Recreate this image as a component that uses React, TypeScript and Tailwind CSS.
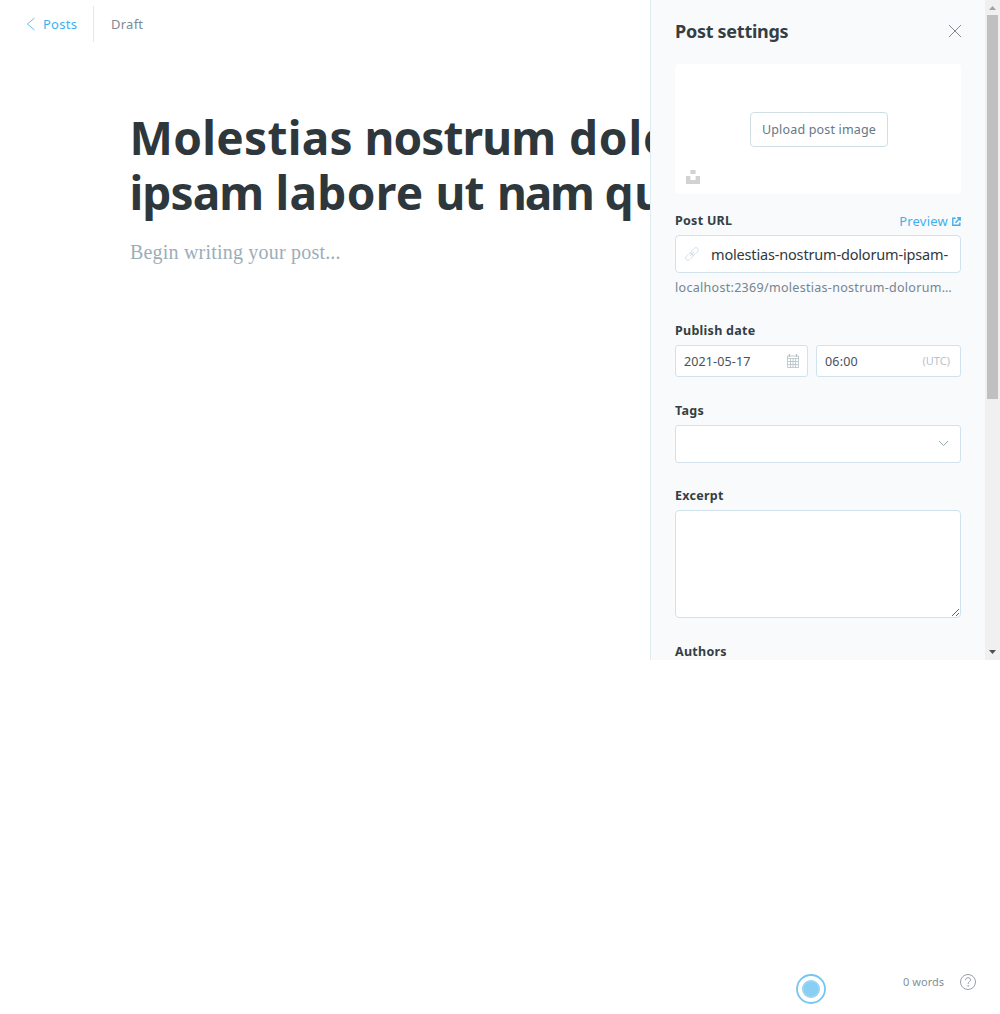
import type { ReactNode } from "react";

function Field({ label, action, className, children }: { label: string; action?: ReactNode; className: string; children?: ReactNode }) {
  return (
    <div className={className}>
      <div className="mb-[7px] flex h-[15px] items-center justify-between">
        <span className="text-[12.5px] leading-[15px] font-bold tracking-[0.27px] text-[#343f44]">{label}</span>
        {action}
      </div>
      {children}
    </div>
  );
}

function LinkIcon() {
  return (
    <svg width="14" height="14" viewBox="0 0 14 14" fill="none" stroke="#cfdbe2" strokeWidth="0.8">
      <g transform="rotate(-45 7 7)">
        <rect x="-1" y="4.6" width="8.6" height="4.8" rx="2.4" />
        <rect x="6.4" y="4.6" width="8.6" height="4.8" rx="2.4" />
        <path d="M4 7h6" />
      </g>
    </svg>
  );
}

function CalendarIcon() {
  return (
    <svg width="14" height="14" viewBox="0 0 14 14" fill="none" stroke="#b4bfc4" strokeWidth="0.8">
      <path d="M1.5 2h11v11.5h-11zM1.5 4.5h11" />
      <path d="M3.5 0v3M10.5 0v3" strokeWidth="1.2" />
      <path d="M4.5 5v8M7 5v8M9.5 5v8M2 7.5h10M2 10.5h10" strokeWidth="0.8" />
    </svg>
  );
}

export default function App() {
  return (
    <div className="flex h-[1014px] w-[1000px] flex-col justify-between overflow-hidden bg-white font-['Noto_Sans',sans-serif]">
      <div className="flex">
        <main className="h-[660px] w-[650px] overflow-hidden">
          <header className="flex h-12 items-center pl-[26px]">
            <svg width="10" height="14" viewBox="0 0 10 14" fill="none" stroke="#3eb0ef" strokeWidth="0.8"><path d="M8.5 1 1.5 7l7 6" /></svg>
            <span className="mt-0.5 ml-[7px] w-[34px] text-[13px] tracking-[0.25px] text-[#3eb0ef]">Posts</span>
            <span className="ml-4 h-9 w-px bg-[#dfe9f2]" />
            <span className="mt-0.5 ml-[17px] text-[13px] tracking-[0.25px] text-[#7c8b9a]">Draft</span>
          </header>
          <h1 className="mt-[62px] ml-[129.5px] w-[700px] text-[46px] leading-[55px] font-bold text-[#2e383c]">
            <span className="flex">
              <span className="w-[235px] tracking-[0.3px]">Molestias </span>
              <span className="w-[204.5px] tracking-[-0.9px]">nostrum </span>
              <span className="tracking-[0.8px]">dolorum </span>
            </span>
            <span className="flex">
              <span className="w-[146px] tracking-[-0.9px]">ipsam </span>
              <span className="w-[160px] tracking-[0.3px]">labore </span>
              <span className="w-[61.5px] tracking-[-0.8px]">ut </span>
              <span className="w-[107.5px] tracking-[-2.2px]">nam </span>
              <span className="tracking-[0.6px]">qui</span>
            </span>
          </h1>
          <p className="mt-[18px] ml-[130px] font-['Liberation_Serif',serif] text-xl tracking-[0.2px] text-[#9baeb8]">Begin writing your post...</p>
        </main>

        <aside className="flex h-[660px] w-[350px] overflow-hidden border-l border-[#dfecf4] bg-[#f9fafc]">
          <div className="w-[334px] shrink-0 px-6">
            <div className="flex h-16 items-center justify-between pr-px pb-0.5">
              <h2 className="text-[18px] font-bold tracking-[-0.27px] text-[#343f44]">Post settings</h2>
              <svg className="-mr-0.5" width="14" height="14" viewBox="0 0 14 14" stroke="#6b757b" strokeWidth="0.85"><path d="m1 1 12 12M13 1 1 13" /></svg>
            </div>
            <div className="flex h-[130px] w-[286px] flex-col items-center rounded bg-white pt-12">
              <button className="ml-0.5 h-[35px] w-[138px] rounded border border-[#d0dfe6] pt-px text-[12.5px] tracking-[0.17px] whitespace-nowrap text-[#647984]">Upload post image</button>
              <svg className="mt-[23px] ml-[11px] self-start" width="14" height="14" viewBox="0 0 14 14" fill="#d2d2d2"><path d="M4.4 0h5.2v4H4.4zM0 6h4.4v4h5.2V6H14v8H0z" /></svg>
            </div>

            <Field
              className="mt-[19px]"
              label="Post URL"
              action={
                <span className="mt-0.5 flex items-center gap-1 text-[13px] tracking-[0.22px] text-[#3eb0ef]">
                  Preview
                  <svg width="9" height="9" viewBox="0 0 9 9" fill="none" stroke="#3eb0ef" strokeWidth="1.4"><path d="M3.6 1.3H.8v7h7V5.4M3.4 5.7 8 1M5.2.8h3v3" /></svg>
                </span>
              }
            >
              <div className="flex h-[38px] w-[286px] items-center rounded border border-[#d2e2ec] bg-white pl-[9px]">
                <LinkIcon />
                <span className="mt-0.5 ml-3 text-[14.5px] tracking-[-0.17px] whitespace-nowrap text-[#30383d]">molestias-nostrum-dolorum-ipsam-</span>
              </div>
              <p className="mt-[5px] text-[12.5px] leading-[19px] tracking-[0.3px] whitespace-nowrap text-[#74858f]">localhost:2369/molestias-nostrum-dolorum…</p>
            </Field>

            <Field className="mt-[26px]" label="Publish date">
              <div className="flex h-8 w-[286px] gap-2 text-[12.5px] text-[#45525a]">
                <div className="flex w-[133px] items-center justify-between rounded-[3px] border border-[#d2e2ec] bg-white pr-[7px] pl-2">
                  <span className="mt-0.5 tracking-[0.12px]">2021-05-17</span>
                  <CalendarIcon />
                </div>
                <div className="flex w-[145px] items-center justify-between rounded-[3px] border border-[#d2e2ec] bg-white pr-2.5 pl-2">
                  <span className="mt-0.5 tracking-[0.2px]">06:00</span>
                  <span className="text-[11px] text-[#b6c3cb]">(UTC)</span>
                </div>
              </div>
            </Field>

            <Field className="mt-[26px]" label="Tags">
              <div className="flex h-[38px] w-[286px] items-center justify-end rounded-[3px] border border-[#d2e2ec] bg-white pr-[11px] pb-px">
                <svg width="11" height="7" viewBox="0 0 11 7" fill="none" stroke="#93a8b3"><path d="m1 1 4.5 4.5L10 1" /></svg>
              </div>
            </Field>

            <Field className="mt-[25px]" label="Excerpt">
              <textarea className="block h-[108px] w-[286px] resize rounded border border-[#d2e2ec] bg-white" />
            </Field>

            <Field className="mt-[26px]" label="Authors" />
          </div>

          <div className="flex w-[15px] shrink-0 flex-col items-center bg-[#f0f0f0]">
            <svg className="shrink-0" width="15" height="15" viewBox="0 0 15 15" fill="#a3a3a3"><path d="M4 10h7L7.5 6z" /></svg>
            <div className="h-[384px] w-[11px] shrink-0 bg-[#c0c0c0]" />
            <svg className="mt-auto shrink-0" width="15" height="15" viewBox="0 0 15 15" fill="#505050"><path d="M4 5h7L7.5 9z" /></svg>
          </div>
        </aside>
      </div>

      <footer className="flex h-[46px] items-start justify-end pr-[23px]">
        <svg className="mt-[6px]" width="30" height="30" viewBox="0 0 30 30">
          <circle cx="15" cy="15" r="14" fill="#fff" stroke="#75c5f2" strokeWidth="1.8" />
          <circle cx="15" cy="15" r="9" fill="#8bcef4" />
          <circle cx="15" cy="15" r="7.9" fill="none" stroke="#a9dbf7" strokeWidth="0.7" />
        </svg>
        <span className="mt-[6px] ml-[77px] w-[41px] text-[11px] leading-4 tracking-[0.05px] whitespace-nowrap text-[#7f919b]">0 words</span>
        <svg className="mt-[5px] ml-4" width="17" height="18" viewBox="0 0 17 18" fill="none" stroke="#8497a1" strokeWidth="0.9">
          <circle cx="8" cy="9" r="7.5" />
          <path d="M5.6 7.2c0-1.5 1-2.5 2.4-2.5s2.5.9 2.5 2.2c0 1.8-2.4 1.9-2.4 4.1" />
          <circle cx="8.1" cy="12.9" r=".35" fill="#8497a1" />
        </svg>
      </footer>
    </div>
  );
}
